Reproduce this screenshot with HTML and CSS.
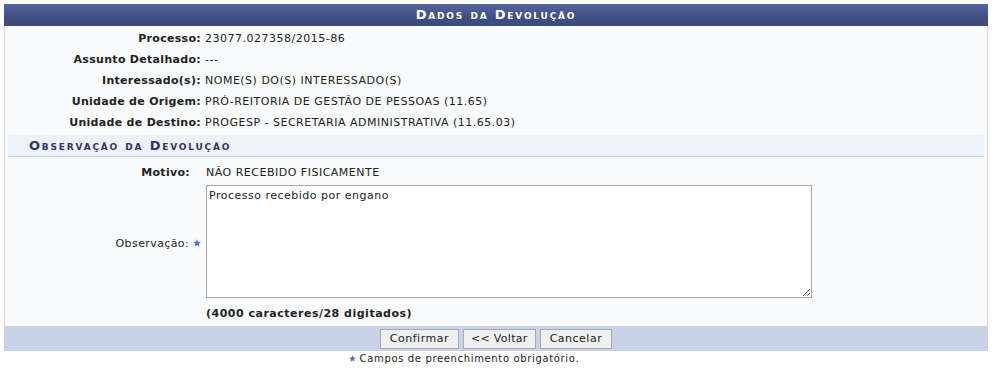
FILE: index.html
```html
<!DOCTYPE html>
<html lang="pt-BR">
<head>
<meta charset="utf-8">
<title>Dados da Devolução</title>
<link rel="stylesheet" href="styles.css">
</head>
<body>
<div class="page">
  <div class="form">
    <div class="caption">Dados da Devolução</div>
    <div class="info">
      <div class="lbl">Processo:</div><div class="val">23077.027358/2015-86</div>
      <div class="lbl">Assunto Detalhado:</div><div class="val">---</div>
      <div class="lbl">Interessado(s):</div><div class="val">NOME(S) DO(S) INTERESSADO(S)</div>
      <div class="lbl">Unidade de Origem:</div><div class="val">PRÓ-REITORIA DE GESTÃO DE PESSOAS (11.65)</div>
      <div class="lbl">Unidade de Destino:</div><div class="val">PROGESP - SECRETARIA ADMINISTRATIVA (11.65.03)</div>
    </div>
    <div class="subcaption">Observação da Devolução</div>
    <div class="obs">
      <div class="lbl lbl-motivo">Motivo:</div><div class="val">NÃO RECEBIDO FISICAMENTE</div>
      <div class="lbl lbl-obs">Observação: <svg class="star" viewBox="0 0 10 10"><polygon points="5,0.3 6.3,3.5 9.8,3.7 7.1,5.9 8,9.5 5,7.5 2,9.5 2.9,5.9 0.2,3.7 3.7,3.5"/></svg></div>
      <div class="val"><textarea class="ta">Processo recebido por engano</textarea></div>
      <div></div><div class="count">(4000 caracteres/28 digitados)</div>
    </div>
    <div class="actions">
      <button class="btn">Confirmar</button>
      <button class="btn btn-back">&lt;&lt; Voltar</button>
      <button class="btn">Cancelar</button>
    </div>
  </div>
  <div class="note"><svg class="star" viewBox="0 0 10 10"><polygon points="5,0.3 6.3,3.5 9.8,3.7 7.1,5.9 8,9.5 5,7.5 2,9.5 2.9,5.9 0.2,3.7 3.7,3.5"/></svg> Campos de preenchimento obrigatório.</div>
</div>
</body>
</html>
```
FILE: styles.css
```css
html, body {
  margin: 0;
  padding: 0;
  background: #ffffff;
}
body {
  font-family: "DejaVu Sans", Verdana, sans-serif;
  font-size: 11px;
  color: #222;
}
.page {
  padding: 4px;
  width: 984px;
}
.form {
  border-left: 1px solid #d6d6d6;
  border-right: 1px solid #d6d6d6;
  background: #f9fafc;
}
.caption {
  height: 22px;
  line-height: 22px;
  margin: 0 -1px;
  background: linear-gradient(#5565a0, #404e82 60%, #3d4a7c);
  color: #fff;
  text-align: center;
  font-weight: bold;
  font-variant: small-caps;
  font-size: 13px;
  letter-spacing: 1.8px;
}
.info {
  display: grid;
  grid-template-columns: 196px 1fr;
  column-gap: 4px;
  padding-top: 2px;
}
.lbl {
  text-align: right;
  font-weight: bold;
  height: 21px;
  line-height: 21px;
  color: #222;
  letter-spacing: 0.3px;
}
.val {
  line-height: 21px;
  color: #222;
  letter-spacing: 0.5px;
}
.subcaption {
  margin: 2px 3px 0 3px;
  height: 21px;
  line-height: 22px;
  background: #edf1f8;
  border-bottom: 1px solid #c8d5ec;
  padding-left: 21px;
  color: #333366;
  font-weight: bold;
  font-variant: small-caps;
  font-size: 13px;
  letter-spacing: 1.8px;
}
.obs {
  display: grid;
  grid-template-columns: 196px 1fr;
  column-gap: 5px;
  padding-top: 5px;
}
.lbl-motivo {
  padding-right: 11px;
}
.lbl-obs {
  font-weight: normal;
  align-self: center;
  height: auto;
  padding-right: 0;
  letter-spacing: 0.4px;
}
.star {
  width: 8px;
  height: 8px;
  fill: #4a6fc0;
  vertical-align: 0;
}
.ta {
  display: block;
  box-sizing: border-box;
  width: 606px;
  height: 113px;
  margin: 2px 0 5px 0;
  border: 1px solid #a9a9a9;
  background: #fff;
  font-family: "DejaVu Sans", Verdana, sans-serif;
  font-size: 11px;
  letter-spacing: 0.5px;
  color: #222;
  padding: 3px 2px;
  resize: both;
}
.count {
  font-weight: bold;
  line-height: 21px;
  padding-bottom: 2px;
  letter-spacing: 0.5px;
}
.actions {
  background: #c8d3ea;
  height: 25px;
  display: flex;
  justify-content: center;
  align-items: center;
  gap: 4px;
  margin: 0 -1px;
}
.btn {
  font-family: "DejaVu Sans", Verdana, sans-serif;
  font-size: 11px;
  letter-spacing: 0.5px;
  color: #222;
  background: #f0f0f0;
  border: 1px solid #aaa;
  height: 20px;
  padding: 0 9px;
  margin: 0;
  border-radius: 0;
}
.btn-back {
  padding: 0 7px;
  letter-spacing: 0.3px;
}
.note {
  text-align: center;
  font-size: 10px;
  line-height: 14px;
  color: #222;
  margin-top: 1px;
  padding-right: 64px;
  letter-spacing: 0.65px;
}
.note .star {
  width: 7px;
  height: 7px;
}
```
